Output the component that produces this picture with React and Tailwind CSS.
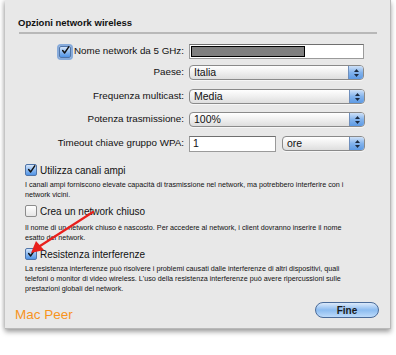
import React from "react";

const font = { fontFamily: '"Liberation Sans", Arial, sans-serif' };

const Check = ({ checked, focus }) => (
  <span
    className={`flex h-[12px] w-[12px] shrink-0 items-center justify-center rounded-[2px] border ${
      checked
        ? "border-[#4f74a8] bg-gradient-to-b from-[#d6e6fa] via-[#8dbaf0] to-[#4f93e6]"
        : "border-[#8c8c8c] bg-gradient-to-b from-[#ffffff] to-[#e6e6e6]"
    } ${focus ? "shadow-[0_0_0_2px_rgba(110,155,215,0.8)]" : ""}`}
  >
    {checked && (
      <svg width="11" height="11" viewBox="0 0 11 11" className="-mt-[2px] ml-[1px]">
        <path d="M2 5.5 L4.5 8.5 L9.5 1" fill="none" stroke="#111" strokeWidth="1.8" strokeLinecap="round" strokeLinejoin="round" />
      </svg>
    )}
  </span>
);

const Popup = ({ value, className = "" }) => (
  <div
    className={`flex h-[15px] items-center overflow-hidden rounded-[4px] border border-[#8a8a8a] bg-gradient-to-b from-[#ffffff] via-[#efefef] to-[#dedede] shadow-[0_1px_0_#f6f6f6] ${className}`}
  >
    <span className="flex-1 pl-[4px] text-[10.5px] leading-none text-[#111]">{value}</span>
    <span className="flex h-full w-[15px] flex-col items-center justify-center gap-[2px] border-l border-[#6f8fbc] bg-gradient-to-b from-[#cfe1f7] via-[#83b3ec] to-[#5d9ae4]">
      <svg width="5" height="3" viewBox="0 0 5 3"><path d="M0 3 L2.5 0 L5 3 Z" fill="#1b2a40" /></svg>
      <svg width="5" height="3" viewBox="0 0 5 3"><path d="M0 0 L2.5 3 L5 0 Z" fill="#1b2a40" /></svg>
    </span>
  </div>
);

const Row = ({ label, children, className = "" }) => (
  <div className={`flex h-[15px] items-center ${className}`}>
    <div className="flex w-[179px] shrink-0 items-center justify-end whitespace-nowrap text-[9.8px] text-[#111]">{label}</div>
    <div className="ml-[5px] flex items-center">{children}</div>
  </div>
);

const Desc = ({ lines, className = "" }) => (
  <div className={`ml-[20px] text-[7.2px] leading-[9.6px] text-[#111] ${className}`}>
    {lines.map((l, i) => (
      <div key={i} className="whitespace-nowrap">{l}</div>
    ))}
  </div>
);

const Option = ({ checked, label, className = "" }) => (
  <div className={`ml-[20px] flex h-[14px] items-center gap-[3px] text-[10px] text-[#111] ${className}`}>
    <Check checked={checked} />
    {label}
  </div>
);

export default function App() {
  return (
    <div className="relative h-[355px] w-[396px] overflow-hidden bg-white" style={font}>
      <div className="ml-[5px] h-[329px] w-[386px] border-r border-b border-[#b9b9b9] bg-[#e8e8e8] shadow-[0_3px_5px_rgba(0,0,0,0.35),-2px_0_4px_rgba(0,0,0,0.12)]">
        <div className="pl-[13px] pt-[16px] text-[9.5px] font-bold leading-[14px] text-[#111]">Opzioni network wireless</div>
        <div className="ml-[14px] mt-[2px] h-[2px] w-[358px] bg-[#b8b8b8]" />

        <Row className="mt-[10px]" label={
          <span className="flex items-center gap-[3px]">
            <Check checked focus />
            Nome network da 5 GHz:
          </span>
        }>
          <div className="flex h-[15px] w-[175px] items-center border border-[#9a9a9a] border-t-[#6f6f6f] bg-white pl-[1px]">
            <div className="h-[11px] w-[114px] border-[1.5px] border-black bg-[#7f7f7f]" />
          </div>
        </Row>

        <Row className="mt-[6px]" label="Paese:">
          <Popup value="Italia" className="w-[175px]" />
        </Row>
        <Row className="mt-[9px]" label="Frequenza multicast:">
          <Popup value="Media" className="w-[176px]" />
        </Row>
        <Row className="mt-[8px]" label="Potenza trasmissione:">
          <Popup value="100%" className="w-[176px]" />
        </Row>
        <Row className="mt-[9px]" label="Timeout chiave gruppo WPA:">
          <div className="flex h-[16px] w-[87px] items-center border border-[#9a9a9a] border-t-[#6f6f6f] bg-white pl-[3px] text-[10.5px] text-[#111]">1</div>
          <Popup value="ore" className="ml-[6px] w-[83px]" />
        </Row>

        <Option checked label="Utilizza canali ampi" className="mt-[12px]" />
        <Desc
          className="mt-[3px]"
          lines={[
            "I canali ampi forniscono elevate capacità di trasmissione nel network, ma potrebbero interferire con i",
            "network vicini.",
          ]}
        />

        <Option label="Crea un network chiuso" className="mt-[5px]" />
        <Desc
          className="mt-[5px]"
          lines={[
            "Il nome di un network chiuso è nascosto. Per accedere al network, i client dovranno inserire il nome",
            "esatto del network.",
          ]}
        />

        <Option checked label="Resistenza interferenze" className="mt-[5px]" />
        <Desc
          className="mt-[3px]"
          lines={[
            "La resistenza interferenze può risolvere i problemi causati dalle interferenze di altri dispositivi, quali",
            "telefoni o monitor di video wireless. L'uso della resistenza interferenze può avere ripercussioni sulle",
            "prestazioni globali del network.",
          ]}
        />

        <div className="mt-[9px] flex items-start justify-between pl-[10px] pr-[11px]">
          <span className="mt-[6px] text-[13.5px] leading-none text-[#f7941d]">Mac Peer</span>
          <button className="flex h-[16px] w-[64px] items-center justify-center rounded-full border border-[#4a6b99] bg-gradient-to-b from-[#dbe9fa] via-[#8cbcf0] to-[#bcdafa] text-[10px] font-bold text-[#1a1a1a]">
            Fine
          </button>
        </div>
      </div>

      <svg className="pointer-events-none absolute left-0 top-0" width="396" height="355" viewBox="0 0 396 355">
        <line x1="93" y1="212" x2="40" y2="246" stroke="#e8201c" strokeWidth="2.2" strokeLinecap="round" />
        <path d="M31 253 L36 241 L44 250 Z" fill="#e8201c" />
      </svg>
    </div>
  );
}
